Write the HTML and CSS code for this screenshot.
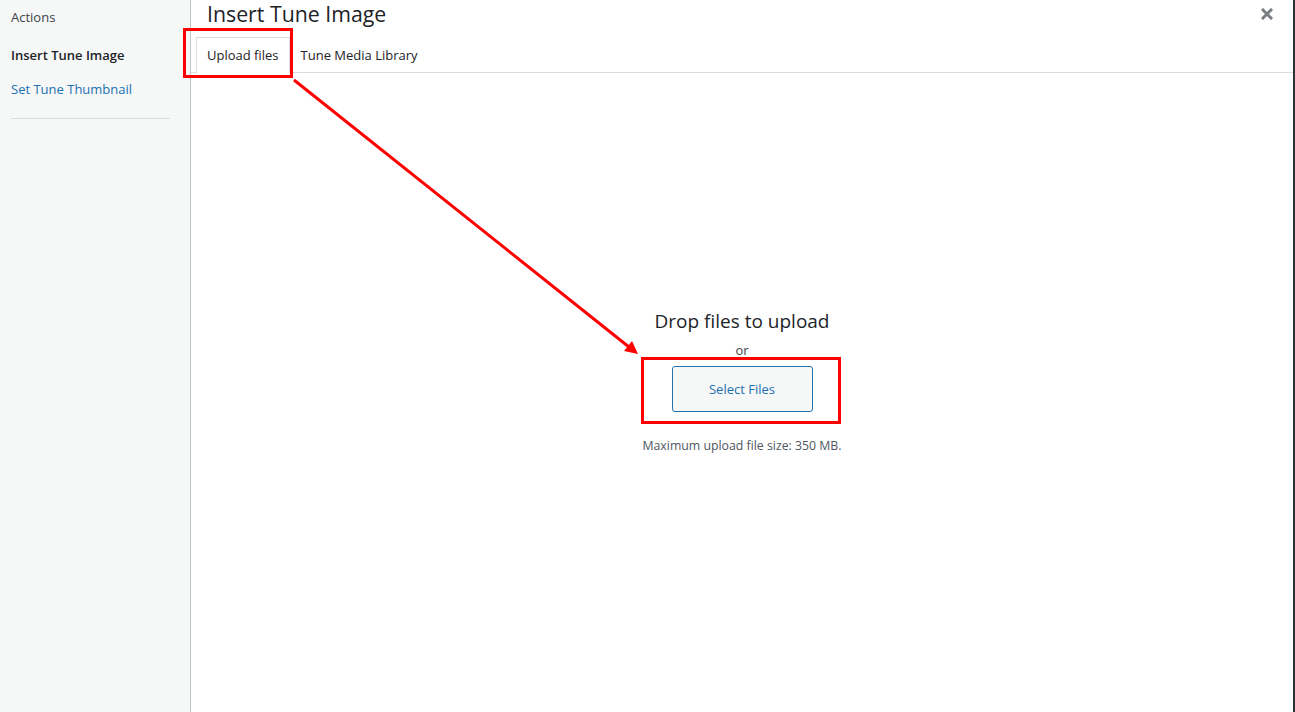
FILE: index.html
```html
<!DOCTYPE html>
<html lang="en">
<head>
    <meta charset="UTF-8">
    <title>Insert Tune Image</title>
    <link rel="stylesheet" href="styles.css">
</head>
<body>
    <div class="frame">
        <div class="sidebar">
            <h3 class="sidebar-title">Actions</h3>
            <div class="menu">
                <a class="menu-item active">Insert Tune Image</a>
                <a class="menu-item">Set Tune Thumbnail</a>
            </div>
            <div class="separator"></div>
        </div>
        <div class="main">
            <div class="title-row">
                <h1 class="title">Insert Tune Image</h1>
                <button class="close" aria-label="Close">
                    <svg width="12" height="12" viewBox="0 0 12 12">
                        <path d="M2 2 L10 10 M10 2 L2 10" stroke="#787c82" stroke-width="3" stroke-linecap="square"/>
                    </svg>
                </button>
            </div>
            <div class="tabs">
                <a class="tab active">Upload files</a>
                <a class="tab">Tune Media Library</a>
            </div>
            <div class="uploader">
                <p class="drop-text">Drop files to upload</p>
                <p class="or">or</p>
                <button class="select-btn">Select Files</button>
                <p class="max-size">Maximum upload file size: 350 MB.</p>
            </div>
        </div>
    </div>

    <!-- red annotation overlay -->
    <svg class="annotations" width="1295" height="712" viewBox="0 0 1295 712">
        <rect x="184.5" y="29.5" width="107" height="47" fill="none" stroke="#ff0000" stroke-width="3"/>
        <rect x="642.5" y="358.5" width="197" height="64" fill="none" stroke="#ff0000" stroke-width="3"/>
        <line x1="294" y1="80" x2="629" y2="347" stroke="#ff0000" stroke-width="3"/>
        <polygon points="638,354 624,351 632,341" fill="#ff0000"/>
    </svg>
</body>
</html>
```

FILE: styles.css
```css
* {
    box-sizing: border-box;
}
body {
    margin: 0;
    font-family: "Open Sans", "Noto Sans", sans-serif;
    font-size: 13px;
    color: #3c434a;
    background: #ffffff;
}
.frame {
    display: flex;
    height: 712px;
    width: 1295px;
}
.sidebar {
    width: 191px;
    flex-shrink: 0;
    background-color: #f6f7f7;
    border-right: 1px solid #c3c4c7;
    padding: 8px 20px 0 11px;
}
.sidebar-title {
    margin: 0;
    font-size: 13px;
    font-weight: normal;
    line-height: 18px;
    color: #3c434a;
}
.menu {
    margin-top: 12px;
    display: flex;
    flex-direction: column;
}
.menu-item {
    padding: 8px 0;
    line-height: 18px;
    color: #2271b1;
}
.menu-item.active {
    color: #1d2327;
    font-weight: 600;
}
.separator {
    margin-top: 12px;
    height: 1px;
    background-color: #dcdcde;
}
.main {
    flex: 1;
    display: flex;
    flex-direction: column;
    border-right: 2px solid #2c3338;
}
.title-row {
    display: flex;
    justify-content: space-between;
    align-items: flex-start;
    padding: 0 16px;
    height: 37px;
}
.title {
    margin: 0;
    font-size: 21.3px;
    font-weight: normal;
    line-height: 28px;
    color: #1d2327;
}
.close {
    border: none;
    background: none;
    padding: 0;
    margin-top: 8px;
    margin-right: 4px;
    width: 12px;
    height: 12px;
}
.close svg {
    display: block;
}
.tabs {
    display: flex;
    padding-left: 5px;
    border-bottom: 1px solid #dcdcde;
    height: 36px;
}
.tab {
    padding: 0 10px 1px;
    line-height: 34px;
    border: 1px solid transparent;
    border-bottom: none;
    color: #1d2327;
}
.tab.active {
    border-color: #dcdcde;
    background-color: #ffffff;
    margin-bottom: -1px;
}
.uploader {
    display: flex;
    flex-direction: column;
    align-items: center;
    padding-top: 234px;
}
.drop-text {
    margin: 0;
    font-size: 19px;
    line-height: 28px;
    color: #1d2327;
}
.or {
    margin: 5px 0 0;
    line-height: 20px;
    color: #3c434a;
}
.select-btn {
    margin-top: 6px;
    width: 141px;
    height: 46px;
    font-family: inherit;
    font-size: 13px;
    color: #2271b1;
    background-color: #f6f7f7;
    border: 1px solid #2271b1;
    border-radius: 3px;
}
.max-size {
    margin: 25px 0 0;
    font-size: 12.3px;
    line-height: 18px;
    color: #50575e;
}
.annotations {
    position: absolute;
    top: 0;
    left: 0;
    pointer-events: none;
}
```
